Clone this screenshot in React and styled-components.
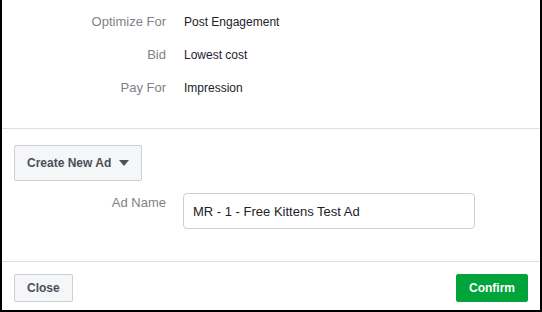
import React from "react";
import styled, { createGlobalStyle } from "styled-components";

const GlobalStyle = createGlobalStyle`
  html, body {
    margin: 0;
    padding: 0;
    background: #ffffff;
  }
  * {
    box-sizing: border-box;
  }
`;

const Frame = styled.div`
  width: 542px;
  height: 312px;
  background: #ffffff;
  border: 2px solid #000000;
  border-top: none;
  display: flex;
  flex-direction: column;
  font-family: "Liberation Sans", Arial, Helvetica, sans-serif;
  color: #1d2129;
`;

const Summary = styled.div`
  padding: 5px 0 24px;
  border-bottom: 1px solid #dddfe2;
`;

const InfoRow = styled.div`
  display: grid;
  grid-template-columns: 164px 1fr;
  column-gap: 18px;
  align-items: center;
  height: 33px;
`;

const Label = styled.div`
  text-align: right;
  font-size: 13px;
  line-height: 16px;
  color: #7f8186;
  padding-top: ${(p) => p.$top || 0}px;
`;

const Value = styled.div`
  font-size: 12px;
  line-height: 16px;
  color: #1d2129;
`;

const Editor = styled.div`
  flex: 1;
  padding: 16px 12px 0;
  border-bottom: 1px solid #dddfe2;
`;

const Button = styled.button`
  display: inline-flex;
  align-items: center;
  gap: 8px;
  height: ${(p) => (p.$tall ? 36 : 28)}px;
  padding: 0 12px;
  border-radius: 2px;
  border: 1px solid ${(p) => (p.$primary ? "#00a43a" : "#ced0d4")};
  background: ${(p) => (p.$primary ? "#00a43a" : "#f5f6f7")};
  color: ${(p) => (p.$primary ? "#ffffff" : "#4b4f56")};
  font-family: "Liberation Sans", Arial, Helvetica, sans-serif;
  font-size: 12px;
  font-weight: bold;
  cursor: pointer;
`;

const FieldRow = styled.div`
  display: grid;
  grid-template-columns: 152px 292px;
  column-gap: 17px;
  align-items: start;
  margin-top: 12px;
`;

const TextInput = styled.input`
  width: 292px;
  height: 36px;
  border: 1px solid #ccd0d5;
  border-radius: 4px;
  padding: 0 9px;
  font-family: "Liberation Sans", Arial, Helvetica, sans-serif;
  font-size: 13px;
  color: #1d2129;
  outline: none;
`;

const Footer = styled.div`
  display: flex;
  justify-content: space-between;
  align-items: flex-start;
  padding: 12px 12px 8px;
`;

const Caret = () => (
  <svg width="10" height="6" viewBox="0 0 10 6">
    <polygon points="0,0 10,0 5,6" fill="#4b4f56" />
  </svg>
);

const summary = [
  ["Optimize For", "Post Engagement"],
  ["Bid", "Lowest cost"],
  ["Pay For", "Impression"],
];

export default function App() {
  return (
    <>
      <GlobalStyle />
      <Frame>
        <Summary>
          {summary.map(([label, value]) => (
            <InfoRow key={label}>
              <Label>{label}</Label>
              <Value>{value}</Value>
            </InfoRow>
          ))}
        </Summary>
        <Editor>
          <Button $tall>
            Create New Ad
            <Caret />
          </Button>
          <FieldRow>
            <Label $top={2}>Ad Name</Label>
            <TextInput defaultValue="MR - 1 - Free Kittens Test Ad" />
          </FieldRow>
        </Editor>
        <Footer>
          <Button>Close</Button>
          <Button $primary>Confirm</Button>
        </Footer>
      </Frame>
    </>
  );
}
